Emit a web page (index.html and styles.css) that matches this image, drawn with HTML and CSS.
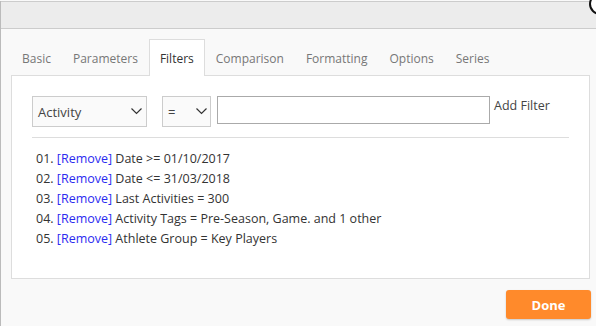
FILE: index.html
```
<!DOCTYPE html>
<html>

<head>
	<meta charset="UTF-8">
	<title>Chart Settings</title>
	<link rel="stylesheet" href="styles.css">
</head>

<body>
	<div class="modal">
		<div class="modal-header">
			<span class="close"></span>
		</div>
		<div class="modal-body">
			<div class="tabs">
				<div class="tab">Basic</div>
				<div class="tab">Parameters</div>
				<div class="tab active">Filters</div>
				<div class="tab">Comparison</div>
				<div class="tab">Formatting</div>
				<div class="tab">Options</div>
				<div class="tab">Series</div>
			</div>
			<div class="tab-panel">
				<div class="filter-row">
					<div class="select select-field">
						<span>Activity</span>
						<svg width="11" height="7" viewBox="0 0 11 7"><path d="M0.5 0.5 L5.5 5.5 L10.5 0.5" fill="none" stroke="#333" stroke-width="1.2"/></svg>
					</div>
					<div class="select select-op">
						<span>=</span>
						<svg width="11" height="7" viewBox="0 0 11 7"><path d="M0.5 0.5 L5.5 5.5 L10.5 0.5" fill="none" stroke="#333" stroke-width="1.2"/></svg>
					</div>
					<input type="text" class="value-input">
					<span class="add-filter">Add Filter</span>
				</div>
				<ul class="filter-list">
					<li>01. <a>[Remove]</a> Date &gt;= 01/10/2017</li>
					<li>02. <a>[Remove]</a> Date &lt;= 31/03/2018</li>
					<li>03. <a>[Remove]</a> Last Activities = 300</li>
					<li>04. <a>[Remove]</a> Activity Tags = Pre-Season, Game. and 1 other</li>
					<li>05. <a>[Remove]</a> Athlete Group = Key Players</li>
				</ul>
			</div>
			<div class="footer">
				<button class="done">Done</button>
			</div>
		</div>
	</div>
</body>

</html>
```

FILE: styles.css
```
body {
	margin: 0;
	background: #f9f9f9;
	font-family: "Open Sans", "Noto Sans", sans-serif;
	font-size: 12px;
	color: #333;
	overflow: hidden;
}

.modal {
	position: relative;
	height: 326px;
	border-left: 1px solid #bbb;
	box-sizing: border-box;
}

.modal-header {
	height: 26px;
	margin-top: 1px;
	background: #ececec;
	border-top: 1px solid #ccc;
	border-bottom: 1px solid #ccc;
}

.close {
	position: absolute;
	top: -8px;
	right: -15px;
	width: 18px;
	height: 18px;
	border: 2px solid #111;
	border-radius: 50%;
	background: #fff;
}

.modal-body {
	padding: 10px 6px 0 10px;
}

.tabs {
	display: flex;
}

.tab {
	height: 36px;
	line-height: 37px;
	padding: 0 10px;
	color: #777;
	border: 1px solid transparent;
	border-bottom: none;
	box-sizing: border-box;
}

.tab.active {
	background: #fff;
	color: #333;
	border-color: #ddd;
	margin-bottom: -1px;
	height: 37px;
	position: relative;
}

.tab-panel {
	background: #fff;
	border: 1px solid #ddd;
	padding: 20px 20px 0 20px;
	height: 204px;
	box-sizing: border-box;
}

.filter-row {
	display: flex;
	align-items: flex-start;
	padding-bottom: 10px;
	border-bottom: 1px solid #ddd;
}

.select {
	display: flex;
	align-items: center;
	justify-content: space-between;
	height: 31px;
	padding: 0 5px 0 5px;
	border: 1px solid #ccc;
	background: #fafafa;
	box-sizing: border-box;
	font-size: 13px;
}

.select span {
	color: #444;
}

.select-field {
	width: 115px;
	margin-right: 15px;
	padding-right: 4px;
}

.select-op {
	width: 49px;
	margin-right: 6px;
	padding-right: 3px;
}

.value-input {
	width: 273px;
	height: 28px;
	border: 1px solid #aaa;
	box-sizing: border-box;
	margin: 0 4px 0 0;
}

.add-filter {
	font-size: 12.5px;
	line-height: 20px;
	color: #444;
}

.filter-list {
	list-style: none;
	margin: 11px 0 0 0;
	padding: 0 0 0 4px;
}

.filter-list li {
	line-height: 20px;
	font-size: 12.5px;
	white-space: nowrap;
}

.filter-list a {
	color: #2b2bf0;
}

.footer {
	display: flex;
	justify-content: flex-end;
	margin-top: 11px;
	margin-right: -1px;
}

.done {
	width: 85px;
	height: 29px;
	border: none;
	border-radius: 3px;
	background: #ff8a2b;
	color: #fff;
	font-family: "Open Sans", sans-serif;
	font-weight: bold;
	font-size: 13px;
	box-shadow: 0 1px 2px rgba(0, 0, 0, 0.2);
}
```
